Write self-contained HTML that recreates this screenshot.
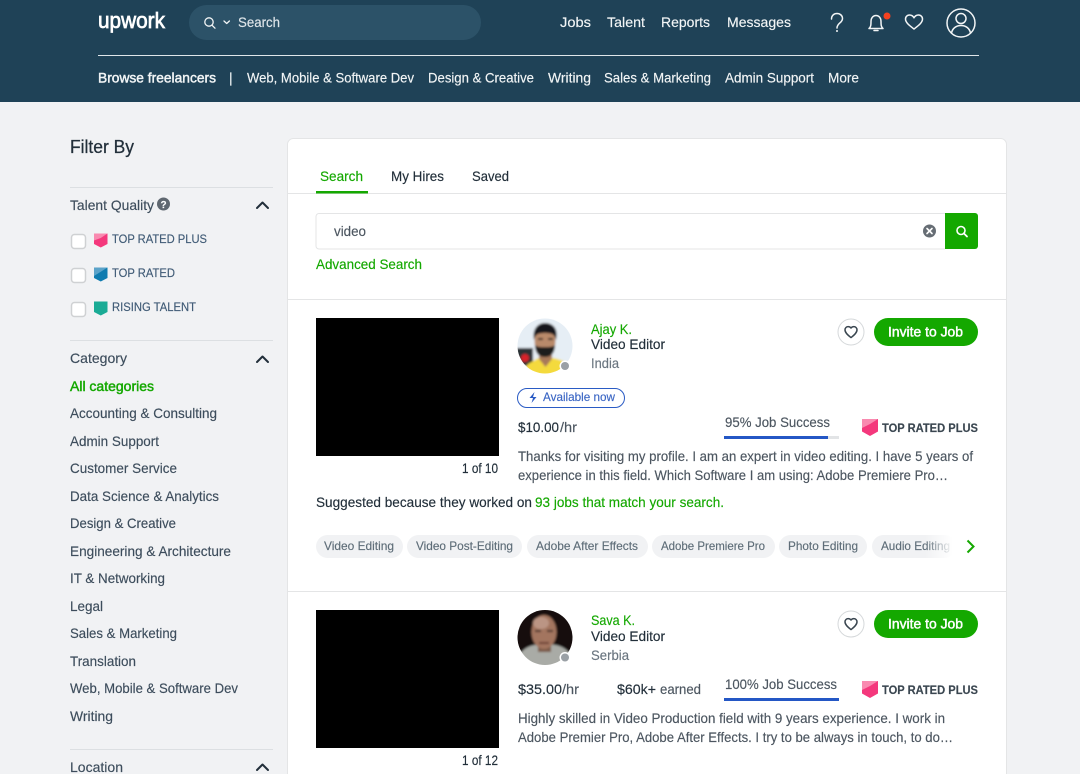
<!DOCTYPE html>
<html><head><meta charset="utf-8"><title>Upwork</title>
<style>
html,body{margin:0;padding:0;background:#f1f2f4;width:1080px;height:774px;overflow:hidden}
svg{display:block}
text{font-family:"Liberation Sans",sans-serif;font-size:14px;color:#222f3a;fill:currentColor;stroke:currentColor;stroke-width:.15px}
.n{color:#f2f5f6;font-size:14px}
.m{stroke-width:.45px}
.s{color:#3d4d5c}
.g{color:#14a800}
.q{color:#3f5a75;font-size:12px}
.d{color:#4c5660;font-size:14px}
.t{color:#5e6d78;font-size:12px}
.ic{fill:none;stroke:#f2f5f6;stroke-width:1.5;stroke-linecap:round;stroke-linejoin:round}
.ch{fill:none;stroke:#222f3a;stroke-width:2;stroke-linecap:round;stroke-linejoin:round}
</style></head><body>
<svg width="1080" height="774" viewBox="0 0 1080 774" xmlns="http://www.w3.org/2000/svg">
<defs>
<clipPath id="a1"><circle cx="545" cy="346" r="27.5"/></clipPath>
<clipPath id="a2"><circle cx="545" cy="637.5" r="27.5"/></clipPath>
<linearGradient id="fade" x1="0" x2="1" y1="0" y2="0"><stop offset="0" stop-color="#fff" stop-opacity="0"/><stop offset="0.85" stop-color="#fff"/><stop offset="1" stop-color="#fff"/></linearGradient>
<filter id="bl" x="-20%" y="-20%" width="140%" height="140%"><feGaussianBlur stdDeviation="1.1"/></filter>
<g id="heart"><path d="M0 5.6C-2.6 3.5-6 1-6-2.1c0-2 1.5-3.3 3.2-3.3C-1.5-5.4-.6-4.7 0-4C.6-4.7 1.5-5.4 2.8-5.4c1.7 0 3.2 1.3 3.2 3.3C6 1 2.6 3.5 0 5.6Z" fill="none" stroke="#3a4650" stroke-width="1.5" stroke-linejoin="round"/></g>
<g id="badge"><path d="M0 0h16v12.5l-8 4.5-8-4.500Z" fill="#f4387c"/><path d="M0 0h16L8 5 0 9Z" fill="#f98ab0"/></g>
</defs>

<!-- header -->
<rect width="1080" height="102" fill="#1f4257"/>
<text x="98" y="28" style="font-size:22px;color:#fff;stroke-width:.7px" textLength="67" lengthAdjust="spacingAndGlyphs">upwork</text>
<rect x="189" y="5" width="292" height="35" rx="17.5" fill="#2c5268"/>
<circle cx="209" cy="22" r="4.2" class="ic" style="stroke-width:1.3"/><path d="M212 25.2l3 3" class="ic" style="stroke-width:1.3"/>
<path d="M224 21l2.700 2.500 2.700-2.500" class="ic" style="stroke-width:1.3"/>
<text x="238" y="27" class="n" textLength="42" lengthAdjust="spacingAndGlyphs" style="color:#dfe6ea">Search</text>
<text x="560" y="27" class="n" textLength="31" lengthAdjust="spacingAndGlyphs">Jobs</text>
<text x="607" y="27" class="n" textLength="38" lengthAdjust="spacingAndGlyphs">Talent</text>
<text x="661" y="27" class="n" textLength="49" lengthAdjust="spacingAndGlyphs">Reports</text>
<text x="727" y="27" class="n" textLength="64" lengthAdjust="spacingAndGlyphs">Messages</text>
<path d="M831.5 19c0-3.600 2.500-5.500 5.500-5.500s5.500 2 5.500 5c0 4.500-5.500 4.500-5.500 9.500" class="ic"/><circle cx="837" cy="31" r="1" fill="#f2f5f6"/>
<path d="M869 28.5c2-1.500 2-4 2-7 0-3.500 2-6 5-6s5 2.500 5 6c0 3 0 5.500 2 7Z" class="ic"/><path d="M874 30.5h4" class="ic"/>
<circle cx="887" cy="16" r="3.5" fill="#f4411f"/>
<path d="M914 29c-3.500-2.800-8.500-6-8.500-10 0-2.600 2-4 4-4 2 0 3.500 1 4.500 2.800 1-1.800 2.500-2.800 4.500-2.800 2 0 4 1.400 4 4 0 4-5 7.200-8.500 10Z" class="ic"/>
<circle cx="961" cy="23" r="14" class="ic"/><circle cx="961" cy="18.5" r="5" class="ic"/><path d="M951.5 33c1-5 5-7.500 9.500-7.500s8.500 2.500 9.500 7.500" class="ic"/>
<rect x="98" y="55" width="881" height="1" fill="#dfe6ea"/>
<text x="98" y="82.500" class="n m" textLength="118" lengthAdjust="spacingAndGlyphs">Browse freelancers</text>
<text x="229" y="82.500" class="n">|</text>
<text x="247" y="82.500" class="n" textLength="167" lengthAdjust="spacingAndGlyphs">Web, Mobile &amp; Software Dev</text>
<text x="428" y="82.500" class="n" textLength="106" lengthAdjust="spacingAndGlyphs">Design &amp; Creative</text>
<text x="548" y="82.500" class="n" textLength="43" lengthAdjust="spacingAndGlyphs">Writing</text>
<text x="604" y="82.500" class="n" textLength="107" lengthAdjust="spacingAndGlyphs">Sales &amp; Marketing</text>
<text x="725" y="82.500" class="n" textLength="89" lengthAdjust="spacingAndGlyphs">Admin Support</text>
<text x="828" y="82.500" class="n" textLength="31" lengthAdjust="spacingAndGlyphs">More</text>

<!-- sidebar -->
<text x="70" y="153" style="font-size:18px;stroke-width:.25px" textLength="64" lengthAdjust="spacingAndGlyphs">Filter By</text>
<rect x="70" y="187" width="203" height="1" fill="#dcdfe2"/>
<text x="70" y="210" class="s" textLength="84" lengthAdjust="spacingAndGlyphs">Talent Quality</text>
<circle cx="163.5" cy="204" r="6.5" fill="#5f6770"/>
<text x="160.500" y="208" style="font-size:10px;font-weight:700;color:#fff">?</text>
<path d="M257 208l5.500-5.500 5.500 5.500" class="ch"/>
<g fill="#fff" stroke="#cfd1d3" stroke-width="1.5">
<rect x="71.5" y="234.5" width="14" height="14" rx="3"/>
<rect x="71.5" y="268.5" width="14" height="14" rx="3"/>
<rect x="71.5" y="302.5" width="14" height="14" rx="3"/>
</g>
<path d="M94 233.500h13.500v10.500l-6.750 3.500-6.750-3.500Z" fill="#f4387c"/><path d="M94 233.500h13.500l-6.750 4.500-6.750 2.500Z" fill="#f98ab0"/>
<path d="M94 267.500h13.500v10.500l-6.750 3.500-6.750-3.500Z" fill="#0f7cb0"/><path d="M94 267.500h13.500L94 276Z" fill="#5ba3c9"/>
<path d="M94 301.500h13.500v10.500l-6.750 3.500-6.750-3.500Z" fill="#1aab95"/>
<text x="112" y="243" class="q" textLength="95" lengthAdjust="spacingAndGlyphs">TOP RATED PLUS</text>
<text x="112" y="277" class="q" textLength="63" lengthAdjust="spacingAndGlyphs">TOP RATED</text>
<text x="112" y="311" class="q" textLength="84" lengthAdjust="spacingAndGlyphs">RISING TALENT</text>
<rect x="70" y="340" width="203" height="1" fill="#dcdfe2"/>
<text x="70" y="363" class="s" textLength="57" lengthAdjust="spacingAndGlyphs">Category</text>
<path d="M257 362l5.500-5.500 5.500 5.500" class="ch"/>
<text x="70" y="391" class="g m" textLength="84" lengthAdjust="spacingAndGlyphs">All categories</text>
<text x="70" y="418" class="s" textLength="147" lengthAdjust="spacingAndGlyphs">Accounting &amp; Consulting</text>
<text x="70" y="446" class="s" textLength="89" lengthAdjust="spacingAndGlyphs">Admin Support</text>
<text x="70" y="473" class="s" textLength="107" lengthAdjust="spacingAndGlyphs">Customer Service</text>
<text x="70" y="501" class="s" textLength="149" lengthAdjust="spacingAndGlyphs">Data Science &amp; Analytics</text>
<text x="70" y="528" class="s" textLength="106" lengthAdjust="spacingAndGlyphs">Design &amp; Creative</text>
<text x="70" y="556" class="s" textLength="161" lengthAdjust="spacingAndGlyphs">Engineering &amp; Architecture</text>
<text x="70" y="583" class="s" textLength="95" lengthAdjust="spacingAndGlyphs">IT &amp; Networking</text>
<text x="70" y="611" class="s" textLength="33" lengthAdjust="spacingAndGlyphs">Legal</text>
<text x="70" y="638" class="s" textLength="107" lengthAdjust="spacingAndGlyphs">Sales &amp; Marketing</text>
<text x="70" y="666" class="s" textLength="66" lengthAdjust="spacingAndGlyphs">Translation</text>
<text x="70" y="693" class="s" textLength="168" lengthAdjust="spacingAndGlyphs">Web, Mobile &amp; Software Dev</text>
<text x="70" y="721" class="s" textLength="43" lengthAdjust="spacingAndGlyphs">Writing</text>
<rect x="70" y="749" width="203" height="1" fill="#dcdfe2"/>
<text x="70" y="772" class="s" textLength="53" lengthAdjust="spacingAndGlyphs">Location</text>
<path d="M257 770l5.500-5.500 5.500 5.500" class="ch"/>

<!-- main card -->
<path d="M287.500 774V144.500a6 6 0 0 1 6-6h707a6 6 0 0 1 6 6V774" fill="#fff" stroke="#e4e5e6"/>
<text x="320" y="181" class="g" textLength="43" lengthAdjust="spacingAndGlyphs">Search</text>
<text x="391" y="181" textLength="53" lengthAdjust="spacingAndGlyphs">My Hires</text>
<text x="472" y="181" textLength="37" lengthAdjust="spacingAndGlyphs">Saved</text>
<rect x="288" y="193" width="718" height="1" fill="#e4e5e6"/>
<rect x="316" y="191" width="52" height="2.5" fill="#14a800"/>
<path d="M945 213.500H319a3 3 0 0 0-3 3v29.500a3 3 0 0 0 3 3h626" fill="#fff" stroke="#e4e5e6"/>
<text x="334" y="236" class="d" textLength="32" lengthAdjust="spacingAndGlyphs">video</text>
<circle cx="929.5" cy="231" r="6.5" fill="#666d74"/>
<path d="M927 228.500l5 5M932 228.500l-5 5" stroke="#fff" stroke-width="1.6" stroke-linecap="round"/>
<path d="M945 213h30a3 3 0 0 1 3 3v30a3 3 0 0 1-3 3h-30Z" fill="#14a800"/>
<circle cx="961" cy="230.5" r="4" fill="none" stroke="#fff" stroke-width="1.6"/><path d="M964 233.500l3 3" stroke="#fff" stroke-width="1.8" stroke-linecap="round"/>
<text x="316" y="269" class="g" textLength="106" lengthAdjust="spacingAndGlyphs">Advanced Search</text>
<rect x="288" y="299" width="718" height="1" fill="#e4e5e6"/>

<!-- item 1 -->
<rect x="316" y="318" width="183" height="138" fill="#000"/>
<text x="462" y="473" textLength="36" lengthAdjust="spacingAndGlyphs">1 of 10</text>
<g clip-path="url(#a1)"><g filter="url(#bl)">
<rect x="515" y="316" width="60" height="60" fill="#e6eef5"/>
<rect x="516" y="348" width="17" height="18" fill="#2a3136"/>
<circle cx="525" cy="358" r="4" fill="#d8242a"/>
<path d="M518 378L528 364C535 360 538 358 540 358L551 358C556 358 562 360 568 364L572 378Z" fill="#f4da3d"/>
<path d="M539 350h13v9l-6.500 8-6.500-8Z" fill="#a8795a"/>
<ellipse cx="545" cy="341" rx="10.5" ry="15" fill="#b98a6a"/>
<path d="M534 340c-2-11 4-17 11-17s14 5 11 17c-1-5-3-7-11-7s-10 2-11 7Z" fill="#17151a"/>
<path d="M535 345c2 2 5 2 10 2s8 0 10-2c0 8-4 12-10 12s-10-4-10-12Z" fill="#1f1a1c"/>
<rect x="538" y="338" width="5" height="2" fill="#3a2c28"/><rect x="548" y="338" width="5" height="2" fill="#3a2c28"/>
</g></g>
<circle cx="565" cy="366" r="5.5" fill="#fff"/><circle cx="565" cy="366" r="4" fill="#9aa0a5"/>
<text x="591" y="334" class="g" textLength="41" lengthAdjust="spacingAndGlyphs">Ajay K.</text>
<text x="591" y="349" textLength="74" lengthAdjust="spacingAndGlyphs">Video Editor</text>
<text x="591" y="368" style="color:#6b7680" textLength="28" lengthAdjust="spacingAndGlyphs">India</text>
<rect x="517.5" y="388.5" width="107" height="19" rx="9.5" fill="#fff" stroke="#2a5bc4"/>
<path d="M534.500 392l-5 6h3.500l-1.500 5 5-6h-3.500Z" fill="#2a5bc4"/>
<text x="543" y="401" style="color:#3b66c4;font-size:12px" textLength="72" lengthAdjust="spacingAndGlyphs">Available now</text>
<text x="518" y="432" class="d" style="color:#222f3a" textLength="41" lengthAdjust="spacingAndGlyphs">$10.00</text>
<text x="560" y="432" class="d" textLength="17" lengthAdjust="spacingAndGlyphs">/hr</text>
<text x="725" y="427" class="d" textLength="105" lengthAdjust="spacingAndGlyphs">95% Job Success</text>
<rect x="724" y="436" width="115" height="3" fill="#e2e4e6"/><rect x="724" y="436" width="104" height="3" fill="#2457c5"/>
<use href="#badge" x="862" y="419"/>
<text x="882" y="432" style="font-size:12px;font-weight:700;color:#3a4650" textLength="96" lengthAdjust="spacingAndGlyphs">TOP RATED PLUS</text>
<circle cx="851" cy="332" r="13" fill="#fff" stroke="#d5d8da"/>
<use href="#heart" x="851" y="332"/>
<rect x="874" y="318" width="104" height="28" rx="14" fill="#14a800"/>
<text x="888" y="336.500" class="m" style="color:#fff" textLength="75" lengthAdjust="spacingAndGlyphs">Invite to Job</text>
<text x="518" y="461" class="d" textLength="455" lengthAdjust="spacingAndGlyphs">Thanks for visiting my profile. I am an expert in video editing. I have 5 years of</text>
<text x="518" y="480" class="d" textLength="430" lengthAdjust="spacingAndGlyphs">experience in this field. Which Software I am using: Adobe Premiere Pro…</text>
<text x="316" y="507" textLength="216" lengthAdjust="spacingAndGlyphs">Suggested because they worked on</text>
<text x="535" y="507" class="g" textLength="189" lengthAdjust="spacingAndGlyphs">93 jobs that match your search.</text>
<g fill="#f1f2f4">
<rect x="316" y="535" width="87" height="23" rx="11.5"/>
<rect x="407" y="535" width="115" height="23" rx="11.5"/>
<rect x="527" y="535" width="121" height="23" rx="11.5"/>
<rect x="652" y="535" width="123" height="23" rx="11.5"/>
<rect x="779" y="535" width="88" height="23" rx="11.5"/>
<rect x="872" y="535" width="84" height="23" rx="11.5"/>
</g>
<text x="324" y="550" class="t" textLength="70" lengthAdjust="spacingAndGlyphs">Video Editing</text>
<text x="416" y="550" class="t" textLength="97" lengthAdjust="spacingAndGlyphs">Video Post-Editing</text>
<text x="536" y="550" class="t" textLength="102" lengthAdjust="spacingAndGlyphs">Adobe After Effects</text>
<text x="661" y="550" class="t" textLength="104" lengthAdjust="spacingAndGlyphs">Adobe Premiere Pro</text>
<text x="788" y="550" class="t" textLength="70" lengthAdjust="spacingAndGlyphs">Photo Editing</text>
<text x="881" y="550" class="t" textLength="69" lengthAdjust="spacingAndGlyphs">Audio Editing</text>
<rect x="925" y="533" width="33" height="27" fill="url(#fade)"/>
<path d="M967.500 540.500l6 6-6 6" fill="none" stroke="#14a800" stroke-width="2"/>
<rect x="288" y="591" width="718" height="1" fill="#e4e5e6"/>

<!-- item 2 -->
<rect x="316" y="610" width="183" height="138" fill="#000"/>
<text x="462" y="765" textLength="36" lengthAdjust="spacingAndGlyphs">1 of 12</text>
<g clip-path="url(#a2)"><g filter="url(#bl)">
<rect x="515" y="607" width="60" height="60" fill="#15110f"/>
<path d="M517 668c0-16 8-24 28-24s28 8 28 24Z" fill="#a9aba6"/>
<rect x="538" y="642" width="13" height="10" fill="#7c5a48"/>
<ellipse cx="544" cy="632" rx="12.500" ry="17" fill="#a3755f"/>
<ellipse cx="541" cy="623" rx="8" ry="6" fill="#bb9584"/>
<rect x="535" y="630" width="6" height="2" fill="#4a3029"/><rect x="547" y="630" width="6" height="2" fill="#4a3029"/>
<rect x="539" y="642" width="10" height="2" fill="#6b3f35"/>
</g></g>
<circle cx="565" cy="657.5" r="5.5" fill="#fff"/><circle cx="565" cy="657.5" r="4" fill="#9aa0a5"/>
<text x="591" y="625" class="g" textLength="44" lengthAdjust="spacingAndGlyphs">Sava K.</text>
<text x="591" y="641" textLength="74" lengthAdjust="spacingAndGlyphs">Video Editor</text>
<text x="591" y="660" style="color:#6b7680" textLength="38" lengthAdjust="spacingAndGlyphs">Serbia</text>
<text x="518" y="694" class="d" style="color:#222f3a" textLength="44" lengthAdjust="spacingAndGlyphs">$35.00</text>
<text x="562" y="694" class="d" textLength="17" lengthAdjust="spacingAndGlyphs">/hr</text>
<text x="617" y="694" class="d" style="color:#222f3a" textLength="39" lengthAdjust="spacingAndGlyphs">$60k+</text>
<text x="660" y="694" class="d" textLength="41" lengthAdjust="spacingAndGlyphs">earned</text>
<text x="725" y="689" class="d" textLength="112" lengthAdjust="spacingAndGlyphs">100% Job Success</text>
<rect x="724" y="698" width="115" height="3" fill="#2457c5"/>
<use href="#badge" x="862" y="681"/>
<text x="882" y="694" style="font-size:12px;font-weight:700;color:#3a4650" textLength="96" lengthAdjust="spacingAndGlyphs">TOP RATED PLUS</text>
<circle cx="851" cy="624" r="13" fill="#fff" stroke="#d5d8da"/>
<use href="#heart" x="851" y="624"/>
<rect x="874" y="610" width="104" height="28" rx="14" fill="#14a800"/>
<text x="888" y="628.500" class="m" style="color:#fff" textLength="75" lengthAdjust="spacingAndGlyphs">Invite to Job</text>
<text x="518" y="723" class="d" textLength="427" lengthAdjust="spacingAndGlyphs">Highly skilled in Video Production field with 9 years experience. I work in</text>
<text x="518" y="742" class="d" textLength="435" lengthAdjust="spacingAndGlyphs">Adobe Premier Pro, Adobe After Effects. I try to be always in touch, to do…</text>
</svg>
</body></html>
